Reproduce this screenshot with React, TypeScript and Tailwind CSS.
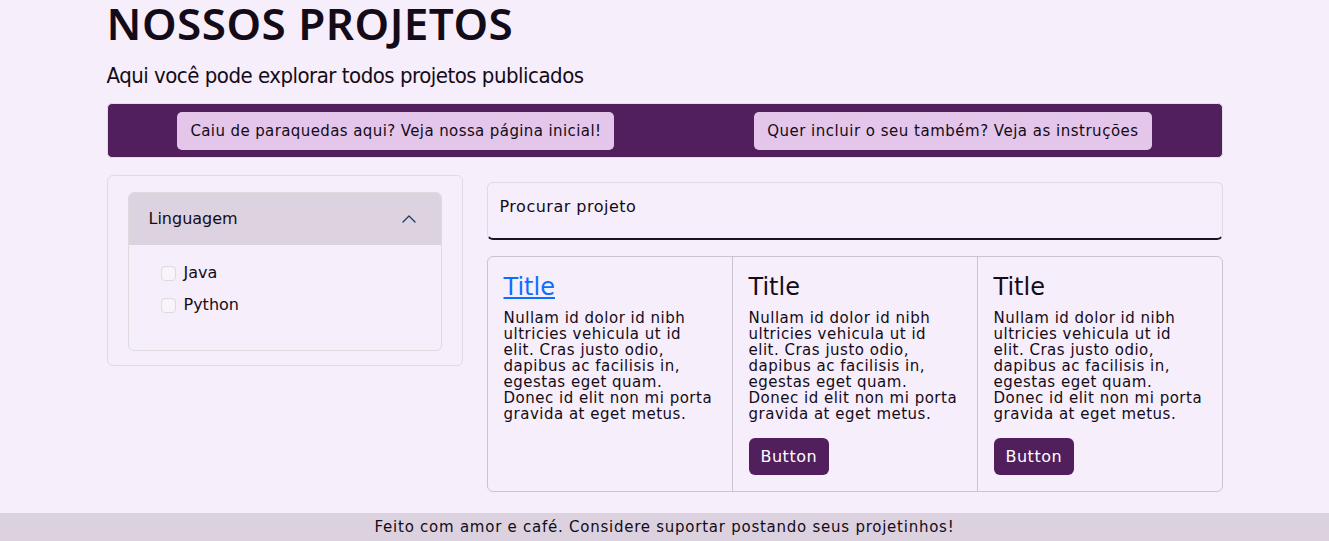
import { ChevronUp } from 'lucide-react';

const bodyLines = [
  'Nullam id dolor id nibh',
  'ultricies vehicula ut id',
  'elit. Cras justo odio,',
  'dapibus ac facilisis in,',
  'egestas eget quam.',
  'Donec id elit non mi porta',
  'gravida at eget metus.',
];

const font = { fontFamily: '"DejaVu Sans", sans-serif' };

function ProjectCard({ link, withButton }: { link?: boolean; withButton?: boolean }) {
  return (
    <div className="flex-1 border-l border-[#cbc4ce] p-4 first:border-l-0">
      {link ? (
        <a href="#" className="mb-2 block text-[24px] leading-[29px] text-[#0d6efd] underline">Title</a>
      ) : (
        <h5 className="mb-2 text-[24px] leading-[29px] text-[#140b18]">Title</h5>
      )}
      <p className="whitespace-nowrap text-[15px] leading-4 tracking-[0.5px] text-[#140b18]">
        {bodyLines.map((line, i) => (
          <span key={i} className="block">{line}</span>
        ))}
      </p>
      {withButton ? (
        <button className="mt-4 rounded-md bg-[#511f5c] px-3 py-2 text-[16px] leading-[21px] tracking-[0.5px] text-white">Button</button>
      ) : null}
    </div>
  );
}

function Check({ label }: { label: string }) {
  return (
    <label className="flex h-6 items-center gap-2">
      <span className="h-[15px] w-[15px] rounded-[4px] border border-[#dedade] bg-[#f8f4fa]" />
      {label}
    </label>
  );
}

export default function App() {
  return (
    <div className="flex min-h-[541px] flex-col bg-[#f6eefa] text-[#140b18]" style={font}>
      <div className="mx-auto w-[1140px] flex-1 px-3">
        <h1 className="text-[44px] font-semibold leading-[46px] tracking-[0.5px]" style={{ fontFamily: '"Noto Sans", sans-serif' }}>NOSSOS PROJETOS</h1>
        <p className="mt-[13px] text-[22px] leading-[34px] tracking-[-0.5px]" style={{ fontFamily: '"Liberation Sans Narrow", "DejaVu Sans Condensed", sans-serif' }}>Aqui você pode explorar todos projetos publicados</p>

        <nav className="mt-[10px] flex h-[55px] items-center justify-around rounded-[5px] border border-[#e5dcea] bg-[#511f5c]">
          <a href="#" className="rounded-[5px] bg-[#e3c6ea] px-[13px] py-[9px] text-[15px] leading-[20px] tracking-[0.4px]">Caiu de paraquedas aqui? Veja nossa página inicial!</a>
          <a href="#" className="rounded-[5px] bg-[#e3c6ea] px-[13px] py-[9px] text-[15px] leading-[20px] tracking-[0.5px]">Quer incluir o seu também? Veja as instruções</a>
        </nav>

        <div className="mt-[17px] flex gap-6">
          <aside className="h-[191px] w-[356px] shrink-0 rounded-md border border-[#e0dbe3] px-5 pt-4">
            <div className="overflow-hidden rounded-md border border-[#dedade]">
              <div className="flex h-[52px] items-center justify-between bg-[#ddd2df] px-5 text-[16px]">
                <span>Linguagem</span>
                <ChevronUp className="h-6 w-6 text-[#1b3a6b]" strokeWidth={1.3} />
              </div>
              <div className="flex flex-col gap-2 px-8 pb-[33px] pt-4 text-[16px]">
                <Check label="Java" />
                <Check label="Python" />
              </div>
            </div>
          </aside>

          <main className="flex-1">
            <div className="mt-[7px] h-[58px] rounded-md border border-[#e0dbe3] border-b-2 border-b-[#1f1024] px-3 pt-3 text-[16px] tracking-[0.5px]">Procurar projeto</div>
            <div className="mt-4 flex rounded-md border border-[#cbc4ce]">
              <ProjectCard link />
              <ProjectCard withButton />
              <ProjectCard withButton />
            </div>
          </main>
        </div>
      </div>

      <footer className="mt-[21px] flex h-[28px] items-center justify-center bg-[#dcd2df] text-[15px] tracking-[0.75px]">
        Feito com amor e café. Considere suportar postando seus projetinhos!
      </footer>
    </div>
  );
}
